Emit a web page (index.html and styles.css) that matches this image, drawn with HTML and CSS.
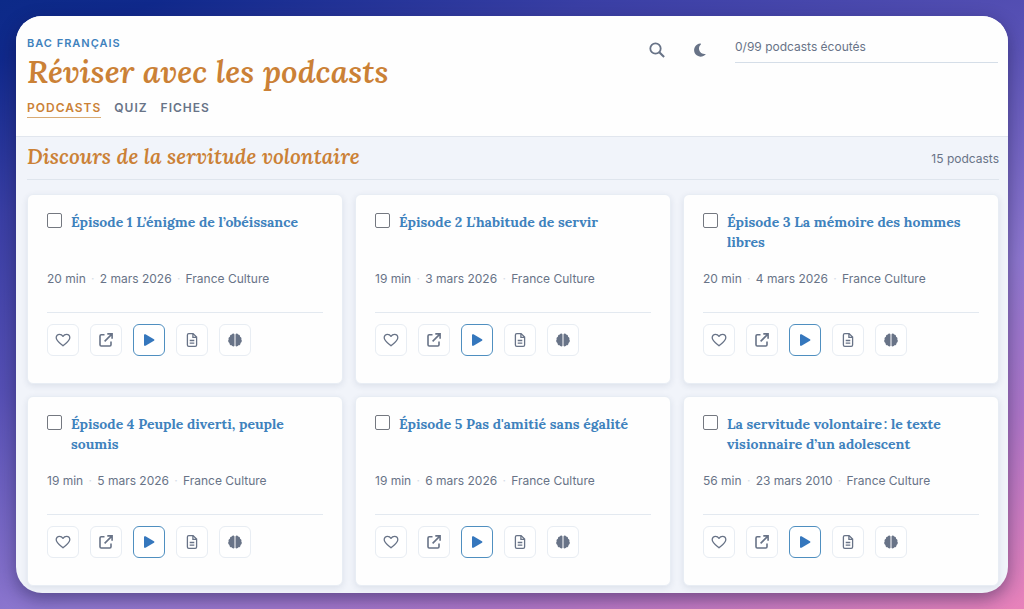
FILE: index.html
```html
<!DOCTYPE html>
<html lang="fr">
<head>
<meta charset="utf-8">
<meta name="viewport" content="width=device-width, initial-scale=1">
<title>Réviser avec les podcasts</title>
<link rel="stylesheet" href="styles.css">
</head>
<body>
<svg class="sprite" aria-hidden="true">
  <symbol id="heart" viewBox="0 0 16 16"><path d="M8 13.800C5 11.300 1.200 8.700 1.200 5.700C1.200 3.600 2.700 2.300 4.500 2.300C6 2.300 7.200 3.100 8 4.400C8.800 3.100 10 2.300 11.500 2.300C13.300 2.300 14.800 3.600 14.800 5.700C14.800 8.700 11 11.300 8 13.800z" fill="none" stroke="currentColor" stroke-width="1.300" stroke-linejoin="round"/></symbol>
  <symbol id="external" viewBox="0 0 16 16"><path d="M6.500 2.800H3.200C2.500 2.800 2 3.300 2 4v8.800c0 .7.5 1.200 1.200 1.200h8.600c.7 0 1.200-.5 1.200-1.200V9.500M9.300 1.900h4.800v4.800M13.600 2.400L6.600 9.400" fill="none" stroke="currentColor" stroke-width="1.600"/></symbol>
  <symbol id="play" viewBox="0 0 16 16"><path d="M3 3.100v9.800c0 .8.800 1.200 1.500.8l8.400-4.900c.6-.4.600-1.200 0-1.600L4.500 2.300C3.800 1.900 3 2.300 3 3.100z" fill="currentColor"/></symbol>
  <symbol id="file" viewBox="0 0 16 16"><path d="M4.800 1.600h4.300l3.500 3.500v7.900c0 .8-.6 1.400-1.400 1.400H4.800c-.8 0-1.400-.6-1.400-1.400V3c0-.8.6-1.400 1.400-1.400zM8.900 1.800v3.500h3.500M5.700 8.500h4.600M5.700 11.200h4.600" fill="none" stroke="currentColor" stroke-width="1.300"/></symbol>
  <symbol id="brain" viewBox="0 0 16 16"><path d="M7.500 2.500v11.300c-.2.800-2.300 1-2.800-.5-1.500.2-2.500-1-2.200-2.300C1 10.300.8 8.600 1.700 7.600 1.200 6.300 1.800 5 2.900 4.700 2.900 3.200 3.900 2.400 4.900 2.500 5.300 1.200 7.200 1.200 7.500 2.500zM8.500 2.500v11.300c.2.800 2.300 1 2.800-.5 1.500.2 2.500-1 2.200-2.300 1.500-.7 1.700-2.400.8-3.400.5-1.300-.1-2.600-1.200-2.900 0-1.500-1-2.300-2-2.200-.4-1.300-2.300-1.300-2.600 0z" fill="currentColor"/></symbol>
</svg>
<div class="app">
  <header class="header">
    <div class="brand">
      <p class="eyebrow">Bac français</p>
      <h1 class="title">Réviser avec les podcasts</h1>
      <nav class="nav">
        <a class="nav-link active" href="#podcasts">Podcasts</a>
        <a class="nav-link" href="#quiz">Quiz</a>
        <a class="nav-link" href="#fiches">Fiches</a>
      </nav>
    </div>
    <div class="tools">
      <button class="tool" type="button" aria-label="Rechercher"><svg viewBox="0 0 16 16"><circle cx="6.500" cy="6.500" r="5.200" fill="none" stroke="currentColor" stroke-width="1.800"/><path d="M10.300 10.300l4.800 4.800" stroke="currentColor" stroke-width="2.100"/></svg></button>
      <button class="tool" type="button" aria-label="Mode sombre"><svg viewBox="0 0 16 16"><path d="M8.300 1.500A6.600 6.600 0 1 0 13.500 12.600c.3-.4 0-.8-.5-.7C9.600 12.300 7 9.800 7 6.600c0-1.600.6-3 1.800-4.100.4-.4.200-1.100-.5-1z" fill="currentColor"/></svg></button>
      <p class="progress">0/99 podcasts écoutés</p>
    </div>
  </header>
  <main class="main" id="podcasts">
    <div class="section-head">
      <h2 class="section-title">Discours de la servitude volontaire</h2>
      <p class="count">15 podcasts</p>
    </div>
    <div class="grid"></div>
  </main>
</div>
<script src="app.js"></script>
</body>
</html>
```
FILE: app.js
```js
const episodes = [
  ["Épisode 1 L’énigme de l’obéissance", "20 min", "2 mars 2026"],
  ["Épisode 2 L'habitude de servir", "19 min", "3 mars 2026"],
  ["Épisode 3 La mémoire des hommes libres", "20 min", "4 mars 2026"],
  ["Épisode 4 Peuple diverti, peuple soumis", "19 min", "5 mars 2026"],
  ["Épisode 5 Pas d'amitié sans égalité", "19 min", "6 mars 2026"],
  ["La servitude volontaire\u202f: le texte visionnaire d’un adolescent", "56 min", "23 mars 2010"]
];
const actions = [
  ["heart", "Ajouter aux favoris"],
  ["external", "Ouvrir la page"],
  ["play", "Écouter"],
  ["file", "Fiche"],
  ["brain", "Quiz"]
];
document.querySelector(".grid").innerHTML = episodes.map(([title, time, date], i) => `
  <article class="card">
    <div class="card-head">
      <input class="check" type="checkbox" id="ep-${i}">
      <label class="card-title" for="ep-${i}">${title}</label>
    </div>
    <p class="meta"><span>${time}</span><i class="dot">·</i><span>${date}</span><i class="dot">·</i><span>France Culture</span></p>
    <div class="actions">${actions.map(([icon, label]) =>
      `<button class="action ${icon}" type="button" aria-label="${label}"><svg><use href="#${icon}"/></svg></button>`).join("")}</div>
  </article>`).join("");
```
FILE: styles.css
```css
* { box-sizing: border-box; }
body {
  margin: 0;
  min-height: 100vh;
  padding: 16px;
  display: flex;
  background: linear-gradient(160deg, #0c2a88 0%, #10298c 6%, #3a3fa5 22%, #5650b4 40%, #8f78d0 64%, #ae76c8 80%, #e882ba 100%);
  font-family: Inter, "Liberation Sans", sans-serif;
  color: #687387;
}
h1, h2, p { margin: 0; }
button { padding: 0; font: inherit; color: inherit; }
.sprite { position: absolute; width: 0; height: 0; }
.app {
  flex: 1;
  border-radius: 26px;
  overflow: hidden;
  background: #f1f4fa;
  box-shadow: 0 6px 18px rgba(20, 20, 60, 0.45);
}
.header {
  display: flex;
  justify-content: space-between;
  padding: 20px 10px 18px 11px;
  background: #fefefe;
  border-bottom: 1px solid #e1e6ee;
}
.eyebrow {
  font-size: 11px;
  line-height: 14px;
  font-weight: 600;
  letter-spacing: 1px;
  text-transform: uppercase;
  color: #3f82bd;
}
.title, .section-title {
  font-family: Lora, "Liberation Serif", serif;
  font-style: italic;
  font-weight: 600;
  color: #cb8136;
}
.title { font-size: 32px; line-height: 44px; }
.nav { display: flex; gap: 13px; padding-top: 5px; }
.nav-link {
  font-size: 12px;
  line-height: 18px;
  font-weight: 600;
  letter-spacing: 1px;
  text-transform: uppercase;
  text-decoration: none;
  color: #687387;
  border-bottom: 1px solid transparent;
}
.nav-link.active { color: #cb8136; border-color: #d9ab74; }
.tools { display: flex; align-items: flex-start; }
.tool {
  width: 43px;
  height: 28px;
  display: grid;
  place-items: center;
  border: 0;
  background: none;
}
.tool svg { width: 16px; height: 16px; }
.progress {
  width: 263px;
  margin-left: 14px;
  padding: 2px 0 7px;
  font-size: 12px;
  line-height: 17px;
  border-bottom: 1px solid #d5dee8;
}
.main { padding: 0 9px 6px 11px; }
.section-head {
  display: flex;
  justify-content: space-between;
  align-items: center;
  height: 43px;
  border-bottom: 1px solid #dfe5ed;
}
.section-title { font-size: 21px; line-height: 32px; padding-bottom: 3px; }
.count { font-size: 12px; line-height: 16px; padding-top: 2px; }
.grid {
  display: grid;
  grid-template-columns: repeat(3, 1fr);
  gap: 12px;
  padding-top: 14px;
}
.card {
  padding: 17px 19px 27px;
  border: 1px solid #e8edf4;
  border-radius: 6px;
  background: #fefefe;
  box-shadow: 0 2px 6px rgba(40, 60, 100, 0.1);
}
.card-head { display: flex; gap: 9px; height: 40px; }
.check {
  appearance: none;
  flex: none;
  width: 15px;
  height: 15px;
  margin: 1px 0 0;
  border: 1px solid #747880;
  border-radius: 2px;
  background: #fff;
}
.card-title {
  font-family: Lora, "Liberation Serif", serif;
  font-size: 14px;
  line-height: 20px;
  font-weight: 700;
  color: #3f82bd;
}
.meta {
  display: flex;
  padding: 18px 0 25px;
  font-size: 12px;
  line-height: 17px;
  border-bottom: 1px solid #e3e9f0;
}
.dot { width: 14px; text-align: center; font-style: normal; color: #d5dce6; }
.actions { display: flex; gap: 11px; padding-top: 11px; }
.action {
  width: 32px;
  height: 32px;
  display: grid;
  place-items: center;
  border: 1px solid #e8edf3;
  border-radius: 6px;
  background: #fff;
}
.action svg { width: 16px; height: 16px; }
.action.play { color: #3577bd; border-color: #4f8fc0; }
```
